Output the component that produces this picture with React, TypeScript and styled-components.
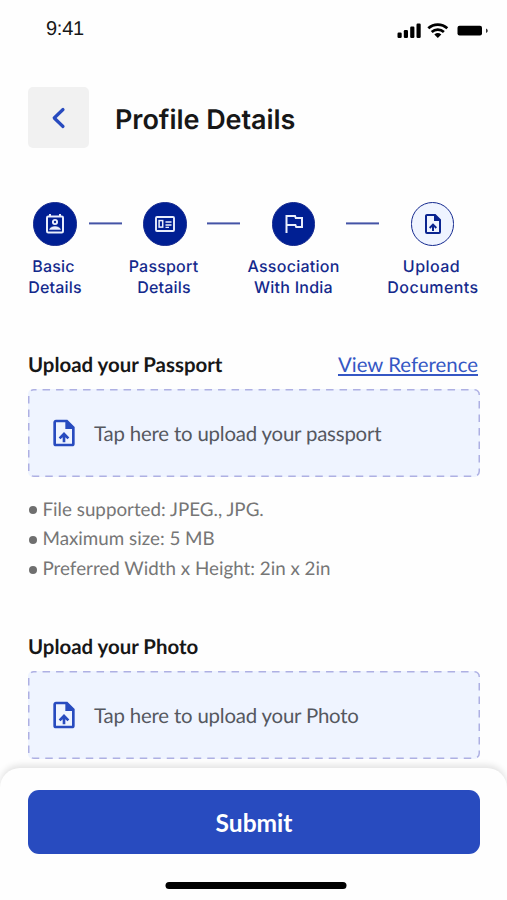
import React from "react";
import styled, { createGlobalStyle } from "styled-components";

const Global = createGlobalStyle`
  * { box-sizing: border-box; }
  body { margin: 0; background: #fff; font-family: Lato, sans-serif; text-rendering: geometricPrecision; }
  button { font: inherit; border: 0; padding: 0; }
`;

const Screen = styled.div`
  width: 507px;
  height: 900px;
  display: flex;
  flex-direction: column;
  overflow: hidden;
  background: #fefefe;
`;

const StatusBar = styled.div`
  height: 87px;
  flex: none;
  display: flex;
  justify-content: space-between;
  align-items: flex-start;
  padding: 16px 18px 0 46px;
`;

const Clock = styled.span`
  margin-top: 1px;
  font: 400 20px/24px "Liberation Sans", Arial, sans-serif;
  letter-spacing: -0.25px;
  color: #171717;
`;

const StatusIcons = styled.svg`
  width: 92px;
  height: 18px;
  margin-top: 6px;
`;

const Header = styled.header`
  height: 61px;
  flex: none;
  display: flex;
  align-items: center;
  gap: 26px;
  padding: 0 28px;
`;

const BackButton = styled.button`
  width: 61px;
  height: 61px;
  border-radius: 5px;
  background: #f1f1f1;
  display: grid;
  place-items: center;
`;

const Title = styled.h1`
  margin: 4px 0 0;
  font: 600 27px/32px Inter, sans-serif;
  letter-spacing: -0.05px;
  color: #171717;
`;

const Stepper = styled.nav`
  height: 98px;
  flex: none;
  margin-top: 54px;
  padding: 0 28px;
  display: grid;
  grid-template-columns: 54px 47px 70px 48px 93px 46px 94px;
`;

const Step = styled.div`
  display: flex;
  flex-direction: column;
  align-items: center;
`;

const StepDot = styled.div<{ $current?: boolean; $nudge?: number }>`
  width: 43.5px;
  height: 43.5px;
  margin-left: ${(p) => p.$nudge ?? 0}px;
  margin-bottom: -0.5px;
  border-radius: 50%;
  display: grid;
  place-items: center;
  color: ${(p) => (p.$current ? "#0a2490" : "#e9eefc")};
  background: ${(p) => (p.$current ? "#eff4ff" : "#001f93")};
  border: 1.5px solid #14298f;
`;

const StepLabel = styled.span<{ $tracking: number }>`
  margin-top: 11px;
  text-align: center;
  white-space: nowrap;
  font: 500 16px/21px Inter, sans-serif;
  letter-spacing: ${(p) => p.$tracking}px;
  color: #14298c;
`;

const LabelLine = styled.span<{ $nudge?: number }>`
  display: block;
  margin-left: ${(p) => p.$nudge ?? 0}px;
`;

const Connector = styled.div<{ $shift: number }>`
  width: 33px;
  height: 2px;
  margin-top: 20px;
  margin-left: ${(p) => p.$shift}px;
  transform: translateY(0.4px);
  background: #4454a6;
`;

const UploadSection = styled.section<{ $top: number }>`
  flex: none;
  padding: 0 27px 0 28px;
  margin-top: ${(p) => p.$top}px;
`;

const SectionHead = styled.div`
  height: 24px;
  display: flex;
  justify-content: space-between;
  padding: 1px 2px 0 0;
  line-height: 24px;
`;

const SectionTitle = styled.h2`
  margin: 0;
  font-size: 20.4px;
  line-height: 24px;
  font-weight: 700;
  color: #171717;
`;

const ReferenceLink = styled.a`
  font-size: 20.4px;
  color: #3557c4;
  text-decoration: underline;
  text-decoration-thickness: 1.5px;
  text-underline-offset: 2px;
`;

const DropZone = styled.div`
  position: relative;
  height: 88px;
  margin-top: 13px;
  padding: 2px 0 0 20px;
  display: flex;
  align-items: center;
  gap: 14px;
  border-radius: 5px;
  background: #eff4ff;
  font-size: 20.4px;
  color: #55585f;
`;

const Dashes = styled.svg`
  position: absolute;
  inset: 0;
  width: 100%;
  height: 100%;
`;

const Notes = styled.ul`
  list-style: none;
  margin: 17.6px 0 0;
  padding: 0 0 0 1px;
  font-size: 18.8px;
  line-height: 29.7px;
  color: #767676;
`;

const Note = styled.li`
  display: flex;
  align-items: center;
  gap: 5.5px;
  &::before {
    content: "";
    width: 8px;
    height: 8px;
    margin-top: 2px;
    border-radius: 50%;
    background: #6f6f6f;
  }
`;

const Content = styled.main`
  height: 768px;
  flex: none;
  overflow: hidden;
`;

const Footer = styled.footer`
  position: relative;
  height: 132px;
  flex: none;
  padding: 22px 27px 0 28px;
  border-radius: 20px 20px 0 0;
  background: #fefefe;
  box-shadow: 0 -3px 6px rgba(0, 0, 0, 0.11);
  display: flex;
  flex-direction: column;
`;

const SubmitButton = styled.button`
  width: 452px;
  height: 64px;
  border-radius: 11px;
  background: #284bbf;
  color: #fff;
  font-size: 24.5px;
  line-height: 65px;
  font-weight: 700;
`;

const HomeIndicator = styled.div`
  width: 181px;
  height: 7px;
  margin: 28px auto 0;
  border-radius: 4px;
  background: #000;
  transform: translateX(1.5px);
`;

const FileUpload = ({ size }: { size: number }) => (
  <svg width={size} height={size} viewBox="0 0 24 24" fill="currentColor">
    <path fillRule="evenodd" d="M6 2h8.5L20 7.5V20a2 2 0 0 1-2 2H6a2 2 0 0 1-2-2V4c0-1.1.9-2 2-2Zm0 2v16h12V9h-5V4H6Z" />
    <path d="m12 11.3 4 4-1.4 1.4-1.6-1.6V19h-2v-3.9l-1.6 1.6L8 15.3l4-4Z" />
  </svg>
);

const BadgeIcon = () => (
  <svg width="24" height="24" viewBox="0 0 24 24" fill="none" stroke="currentColor">
    <rect x="4" y="4.500" width="16" height="16" rx="1.200" strokeWidth="2" />
    <path d="M7 2v3M17 2v3" strokeWidth="2" />
    <circle cx="12" cy="10" r="2.100" strokeWidth="1.900" />
    <path d="M6.500 17.600c.7-2.300 3-3 5.500-3s4.800.7 5.500 3Z" fill="currentColor" strokeWidth=".5" />
  </svg>
);

const CardIcon = () => (
  <svg width="22" height="18" viewBox="0 0 22 18" fill="none" stroke="currentColor">
    <rect x="2" y="2" width="18" height="14" rx="1" strokeWidth="1.900" />
    <rect x="5.100" y="5.600" width="3.600" height="6.500" strokeWidth="1.500" />
    <path d="M11.500 7h6M11.500 10h6M11.500 12.300h3.500" strokeWidth="1.300" />
  </svg>
);

const FlagIcon = () => (
  <svg width="24" height="24" viewBox="0 0 24 24" fill="none" stroke="currentColor" strokeWidth="2">
    <path d="M4.500 21V4h8.500l.8 2H20v9h-5.800l-.8-2H5" />
  </svg>
);

const DashedOutline = () => (
  <Dashes viewBox="0 0 452 88" fill="none">
    <rect x=".75" y=".75" width="450.5" height="86.5" rx="5" stroke="#aeb0e3" strokeWidth="1.5" strokeDasharray="7.5 6" strokeDashoffset="4.7" />
  </Dashes>
);

const UploadIconBox = styled.span`
  width: 32px;
  display: flex;
  justify-content: center;
  margin-top: -2px;
  color: #284bbf;
`;

const UploadPrompt = styled.span`
  letter-spacing: -0.19px;
`;

const Upload = ({ label }: { label: string }) => (
  <DropZone>
    <DashedOutline />
    <UploadIconBox><FileUpload size={32} /></UploadIconBox>
    <UploadPrompt>{label}</UploadPrompt>
  </DropZone>
);

export default function App() {
  return (
    <Screen>
      <Global />
      <Content>
        <StatusBar>
          <Clock>9:41</Clock>
          <StatusIcons viewBox="0 0 92 18">
            <rect x="0.5" y="10.5" width="4.2" height="5.5" rx="1.2" />
            <rect x="6.8" y="8" width="4.2" height="8" rx="1.2" />
            <rect x="13.2" y="4.5" width="4.2" height="11.5" rx="1.2" />
            <rect x="19.5" y="1.5" width="4.2" height="14.5" rx="1.2" />
            <g fill="none" stroke="#000" strokeWidth="2.7">
              <path d="M31.300 6.300a14 14 0 0 1 19 0M34.700 10a9 9 0 0 1 12.200 0" />
            </g>
            <path d="M37.300 12.600a5.400 5.400 0 0 1 7 0l-3.500 3.400Z" />
            <rect x="60.5" y="3.8" width="24.500" height="9.8" rx="2" />
            <path d="M89 6.500c2.300 1 2.300 3.500 0 4.500Z" fill="#333" />
          </StatusIcons>
        </StatusBar>
        <Header>
          <BackButton aria-label="Back">
            <svg width="18" height="24" viewBox="0 0 18 24" fill="none" stroke="#284bbf" strokeWidth="3.2" strokeLinecap="round" strokeLinejoin="round">
              <path d="m13 3.500-8.800 8.500 8.800 8.500" />
            </svg>
          </BackButton>
          <Title>Profile Details</Title>
        </Header>
        <Stepper>
          <Step>
            <StepDot><BadgeIcon /></StepDot>
            <StepLabel $tracking={0.2}>
              <LabelLine $nudge={-3}>Basic</LabelLine>
              <LabelLine>Details</LabelLine>
            </StepLabel>
          </Step>
          <Connector $shift={7} />
          <Step>
            <StepDot $nudge={2}><CardIcon /></StepDot>
            <StepLabel $tracking={0.2}>
              <LabelLine $nudge={-1}>Passport</LabelLine>
              <LabelLine>Details</LabelLine>
            </StepLabel>
          </Step>
          <Connector $shift={8} />
          <Step>
            <StepDot><FlagIcon /></StepDot>
            <StepLabel $tracking={0.25}>
              <LabelLine>Association</LabelLine>
              <LabelLine>With India</LabelLine>
            </StepLabel>
          </Step>
          <Connector $shift={6} />
          <Step>
            <StepDot $current $nudge={-1}><FileUpload size={24} /></StepDot>
            <StepLabel $tracking={0.45}>
              <LabelLine $nudge={-3}>Upload</LabelLine>
              <LabelLine>Documents</LabelLine>
            </StepLabel>
          </Step>
        </Stepper>
        <UploadSection $top={52}>
          <SectionHead>
            <SectionTitle>Upload your Passport</SectionTitle>
            <ReferenceLink>View Reference</ReferenceLink>
          </SectionHead>
          <Upload label="Tap here to upload your passport" />
          <Notes>
            <Note>File supported: JPEG., JPG.</Note>
            <Note>Maximum size: 5 MB</Note>
            <Note>Preferred Width x Height: 2in x 2in</Note>
          </Notes>
        </UploadSection>
        <UploadSection $top={50}>
          <SectionHead>
            <SectionTitle>Upload your Photo</SectionTitle>
          </SectionHead>
          <Upload label="Tap here to upload your Photo" />
        </UploadSection>
      </Content>
      <Footer>
        <SubmitButton>Submit</SubmitButton>
        <HomeIndicator />
      </Footer>
    </Screen>
  );
}
